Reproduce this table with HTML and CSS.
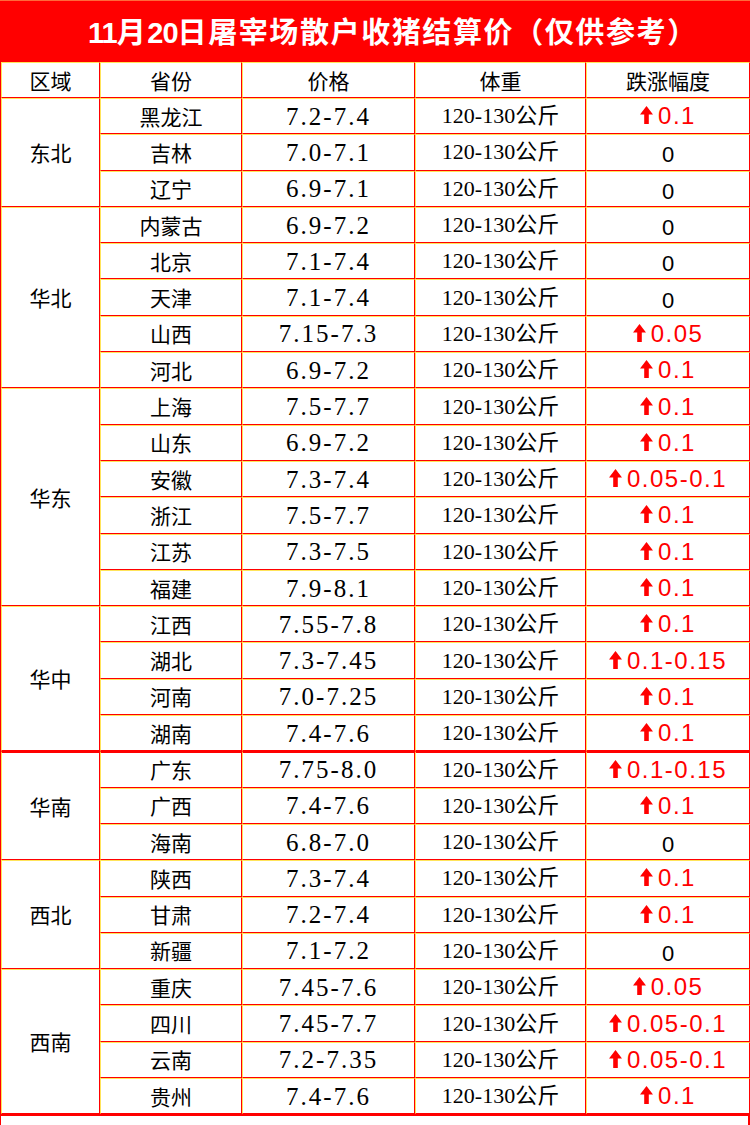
FILE: index.html
```
<!DOCTYPE html>
<html lang="zh-CN">
<head>
<meta charset="utf-8">
<title>11月20日屠宰场散户收猪结算价</title>
<link rel="stylesheet" href="styles.css">
</head>
<body>
<div class="page">
  <div class="title"><span class="tnum">11</span>月<span class="tnum">20</span>日屠宰场散户收猪结算价（仅供参考）</div>
  <table class="grid">
    <colgroup>
      <col class="c1"><col class="c2"><col class="c3"><col class="c4"><col class="c5">
    </colgroup>
    <thead>
      <tr class="head"><th>区域</th><th>省份</th><th>价格</th><th>体重</th><th>跌涨幅度</th></tr>
    </thead>
    <tbody>
      <tr><td class="region" rowspan="3">东北</td><td class="prov">黑龙江</td><td class="price">7.2-7.4</td><td class="wt">120-130公斤</td><td class="chg"><svg class="arr" viewBox="0 0 13 18"><polygon points="6.5,0 13,8.5 8.8,8.5 8.8,18 4.2,18 4.2,8.5 0,8.5"/></svg>0.1</td></tr>
      <tr><td class="prov">吉林</td><td class="price">7.0-7.1</td><td class="wt">120-130公斤</td><td class="chg zero">0</td></tr>
      <tr><td class="prov">辽宁</td><td class="price">6.9-7.1</td><td class="wt">120-130公斤</td><td class="chg zero">0</td></tr>

      <tr><td class="region" rowspan="5">华北</td><td class="prov">内蒙古</td><td class="price">6.9-7.2</td><td class="wt">120-130公斤</td><td class="chg zero">0</td></tr>
      <tr><td class="prov">北京</td><td class="price">7.1-7.4</td><td class="wt">120-130公斤</td><td class="chg zero">0</td></tr>
      <tr><td class="prov">天津</td><td class="price">7.1-7.4</td><td class="wt">120-130公斤</td><td class="chg zero">0</td></tr>
      <tr><td class="prov">山西</td><td class="price">7.15-7.3</td><td class="wt">120-130公斤</td><td class="chg"><svg class="arr" viewBox="0 0 13 18"><polygon points="6.5,0 13,8.5 8.8,8.5 8.8,18 4.2,18 4.2,8.5 0,8.5"/></svg>0.05</td></tr>
      <tr><td class="prov">河北</td><td class="price">6.9-7.2</td><td class="wt">120-130公斤</td><td class="chg"><svg class="arr" viewBox="0 0 13 18"><polygon points="6.5,0 13,8.5 8.8,8.5 8.8,18 4.2,18 4.2,8.5 0,8.5"/></svg>0.1</td></tr>

      <tr><td class="region" rowspan="6">华东</td><td class="prov">上海</td><td class="price">7.5-7.7</td><td class="wt">120-130公斤</td><td class="chg"><svg class="arr" viewBox="0 0 13 18"><polygon points="6.5,0 13,8.5 8.8,8.5 8.8,18 4.2,18 4.2,8.5 0,8.5"/></svg>0.1</td></tr>
      <tr><td class="prov">山东</td><td class="price">6.9-7.2</td><td class="wt">120-130公斤</td><td class="chg"><svg class="arr" viewBox="0 0 13 18"><polygon points="6.5,0 13,8.5 8.8,8.5 8.8,18 4.2,18 4.2,8.5 0,8.5"/></svg>0.1</td></tr>
      <tr><td class="prov">安徽</td><td class="price">7.3-7.4</td><td class="wt">120-130公斤</td><td class="chg"><svg class="arr" viewBox="0 0 13 18"><polygon points="6.5,0 13,8.5 8.8,8.5 8.8,18 4.2,18 4.2,8.5 0,8.5"/></svg>0.05-0.1</td></tr>
      <tr><td class="prov">浙江</td><td class="price">7.5-7.7</td><td class="wt">120-130公斤</td><td class="chg"><svg class="arr" viewBox="0 0 13 18"><polygon points="6.5,0 13,8.5 8.8,8.5 8.8,18 4.2,18 4.2,8.5 0,8.5"/></svg>0.1</td></tr>
      <tr><td class="prov">江苏</td><td class="price">7.3-7.5</td><td class="wt">120-130公斤</td><td class="chg"><svg class="arr" viewBox="0 0 13 18"><polygon points="6.5,0 13,8.5 8.8,8.5 8.8,18 4.2,18 4.2,8.5 0,8.5"/></svg>0.1</td></tr>
      <tr><td class="prov">福建</td><td class="price">7.9-8.1</td><td class="wt">120-130公斤</td><td class="chg"><svg class="arr" viewBox="0 0 13 18"><polygon points="6.5,0 13,8.5 8.8,8.5 8.8,18 4.2,18 4.2,8.5 0,8.5"/></svg>0.1</td></tr>

      <tr><td class="region" rowspan="4">华中</td><td class="prov">江西</td><td class="price">7.55-7.8</td><td class="wt">120-130公斤</td><td class="chg"><svg class="arr" viewBox="0 0 13 18"><polygon points="6.5,0 13,8.5 8.8,8.5 8.8,18 4.2,18 4.2,8.5 0,8.5"/></svg>0.1</td></tr>
      <tr><td class="prov">湖北</td><td class="price">7.3-7.45</td><td class="wt">120-130公斤</td><td class="chg"><svg class="arr" viewBox="0 0 13 18"><polygon points="6.5,0 13,8.5 8.8,8.5 8.8,18 4.2,18 4.2,8.5 0,8.5"/></svg>0.1-0.15</td></tr>
      <tr><td class="prov">河南</td><td class="price">7.0-7.25</td><td class="wt">120-130公斤</td><td class="chg"><svg class="arr" viewBox="0 0 13 18"><polygon points="6.5,0 13,8.5 8.8,8.5 8.8,18 4.2,18 4.2,8.5 0,8.5"/></svg>0.1</td></tr>
      <tr><td class="prov">湖南</td><td class="price">7.4-7.6</td><td class="wt">120-130公斤</td><td class="chg"><svg class="arr" viewBox="0 0 13 18"><polygon points="6.5,0 13,8.5 8.8,8.5 8.8,18 4.2,18 4.2,8.5 0,8.5"/></svg>0.1</td></tr>

      <tr class="sep"><td class="region" rowspan="3">华南</td><td class="prov">广东</td><td class="price">7.75-8.0</td><td class="wt">120-130公斤</td><td class="chg"><svg class="arr" viewBox="0 0 13 18"><polygon points="6.5,0 13,8.5 8.8,8.5 8.8,18 4.2,18 4.2,8.5 0,8.5"/></svg>0.1-0.15</td></tr>
      <tr><td class="prov">广西</td><td class="price">7.4-7.6</td><td class="wt">120-130公斤</td><td class="chg"><svg class="arr" viewBox="0 0 13 18"><polygon points="6.5,0 13,8.5 8.8,8.5 8.8,18 4.2,18 4.2,8.5 0,8.5"/></svg>0.1</td></tr>
      <tr><td class="prov">海南</td><td class="price">6.8-7.0</td><td class="wt">120-130公斤</td><td class="chg zero">0</td></tr>

      <tr><td class="region" rowspan="3">西北</td><td class="prov">陕西</td><td class="price">7.3-7.4</td><td class="wt">120-130公斤</td><td class="chg"><svg class="arr" viewBox="0 0 13 18"><polygon points="6.5,0 13,8.5 8.8,8.5 8.8,18 4.2,18 4.2,8.5 0,8.5"/></svg>0.1</td></tr>
      <tr><td class="prov">甘肃</td><td class="price">7.2-7.4</td><td class="wt">120-130公斤</td><td class="chg"><svg class="arr" viewBox="0 0 13 18"><polygon points="6.5,0 13,8.5 8.8,8.5 8.8,18 4.2,18 4.2,8.5 0,8.5"/></svg>0.1</td></tr>
      <tr><td class="prov">新疆</td><td class="price">7.1-7.2</td><td class="wt">120-130公斤</td><td class="chg zero">0</td></tr>

      <tr><td class="region" rowspan="4">西南</td><td class="prov">重庆</td><td class="price">7.45-7.6</td><td class="wt">120-130公斤</td><td class="chg"><svg class="arr" viewBox="0 0 13 18"><polygon points="6.5,0 13,8.5 8.8,8.5 8.8,18 4.2,18 4.2,8.5 0,8.5"/></svg>0.05</td></tr>
      <tr><td class="prov">四川</td><td class="price">7.45-7.7</td><td class="wt">120-130公斤</td><td class="chg"><svg class="arr" viewBox="0 0 13 18"><polygon points="6.5,0 13,8.5 8.8,8.5 8.8,18 4.2,18 4.2,8.5 0,8.5"/></svg>0.05-0.1</td></tr>
      <tr><td class="prov">云南</td><td class="price">7.2-7.35</td><td class="wt">120-130公斤</td><td class="chg"><svg class="arr" viewBox="0 0 13 18"><polygon points="6.5,0 13,8.5 8.8,8.5 8.8,18 4.2,18 4.2,8.5 0,8.5"/></svg>0.05-0.1</td></tr>
      <tr><td class="prov">贵州</td><td class="price">7.4-7.6</td><td class="wt">120-130公斤</td><td class="chg"><svg class="arr" viewBox="0 0 13 18"><polygon points="6.5,0 13,8.5 8.8,8.5 8.8,18 4.2,18 4.2,8.5 0,8.5"/></svg>0.1</td></tr>
    </tbody>
  </table>
  <div class="foot"></div>
</div>
</body>
</html>
```
FILE: styles.css
```
html, body {
  margin: 0;
  padding: 0;
  background: #ffffff;
}

.page {
  width: 750px;
  height: 1125px;
  overflow: hidden;
  font-family: "Liberation Serif", "Noto Sans CJK SC", serif;
  color: #000;
}

.title {
  height: 62px;
  box-sizing: border-box;
  background: #ff0000;
  border-top: 1px solid #ff6a3a;
  color: #ffffff;
  font-family: "Liberation Sans", "Noto Sans CJK SC", sans-serif;
  font-weight: 700;
  font-size: 29px;
  letter-spacing: 1.6px;
  line-height: 60px;
  padding-left: 88px;
  padding-top: 2px;
  white-space: nowrap;
}

.tnum {
  letter-spacing: -1px;
}

.grid {
  width: 750px;
  table-layout: fixed;
  border-collapse: separate;
  border-spacing: 0;
  border-left: 1px solid #ff0000;
}

.c1 { width: 99px; }
.c2 { width: 142px; }
.c3 { width: 173px; }
.c4 { width: 171px; }
.c5 { width: 164px; }

.grid th,
.grid td {
  padding: 0;
  text-align: center;
  vertical-align: middle;
  border-right: 1px solid #ff0000;
  border-bottom: 1px solid #ff0000;
  border-left: 1px solid #ffe45a;
  border-top: 1px solid #ffe45a;
  white-space: nowrap;
  overflow: hidden;
}

.grid tr {
  height: 36.3px;
}

.grid tr.head {
  height: 36px;
}

.grid th {
  font-family: "Noto Sans CJK SC", sans-serif;
  font-weight: 400;
  font-size: 21px;
  line-height: 1;
}

.region,
.prov {
  font-family: "Noto Sans CJK SC", sans-serif;
  font-size: 21px;
  line-height: 1;
}

.price {
  font-size: 25px;
  letter-spacing: 2px;
  line-height: 1;
  padding-top: 4px;
}

.wt {
  font-size: 22px;
  line-height: 1;
  padding-top: 2px;
}

.chg {
  font-family: "Liberation Sans", sans-serif;
  color: #ff0000;
  font-size: 24px;
  letter-spacing: 1.5px;
  line-height: 1;
  padding-top: 8px;
}

.chg.zero {
  color: #000;
  font-size: 22px;
  letter-spacing: 0;
  padding-top: 6px;
}

.arr {
  width: 13px;
  height: 18px;
  fill: #ff0000;
  vertical-align: baseline;
  margin-right: 5px;
}

.grid tr.sep td {
  border-top: 2px solid #ff0000;
}

.foot {
  height: 12px;
  box-sizing: border-box;
  border-top: 2px solid #ff0000;
  border-left: 1px solid #ff0000;
  border-right: 2px solid #ff0000;
}
```
